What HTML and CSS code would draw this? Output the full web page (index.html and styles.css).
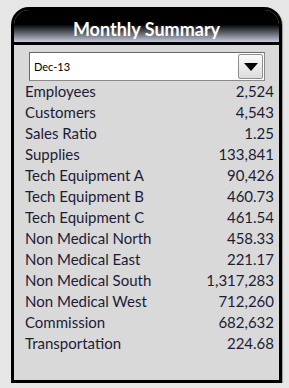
FILE: index.html
```html
<!DOCTYPE html>
<html lang="en">
<head>
    <meta charset="UTF-8">
    <title>Monthly Summary</title>
    <link rel="stylesheet" href="styles.css">
</head>
<body>
    <!-- Summary Panel -->
    <div class="panel">
        <div class="panel-header">Monthly Summary</div>

        <!-- Month selector -->
        <div class="picker">
            <div class="picker-value">Dec-13</div>
            <div class="picker-button">
                <svg width="14" height="8" viewBox="0 0 14 8"><polygon points="0,0 14,0 7,8" fill="#000"/></svg>
            </div>
        </div>

        <!-- Figures -->
        <div class="rows">
            <div class="row"><span>Employees</span><span>2,524</span></div>
            <div class="row"><span>Customers</span><span>4,543</span></div>
            <div class="row"><span>Sales Ratio</span><span>1.25</span></div>
            <div class="row"><span>Supplies</span><span>133,841</span></div>
            <div class="row"><span>Tech Equipment A</span><span>90,426</span></div>
            <div class="row"><span>Tech Equipment B</span><span>460.73</span></div>
            <div class="row"><span>Tech Equipment C</span><span>461.54</span></div>
            <div class="row"><span>Non Medical North</span><span>458.33</span></div>
            <div class="row"><span>Non Medical East</span><span>221.17</span></div>
            <div class="row"><span>Non Medical South</span><span>1,317,283</span></div>
            <div class="row"><span>Non Medical West</span><span>712,260</span></div>
            <div class="row"><span>Commission</span><span>682,632</span></div>
            <div class="row"><span>Transportation</span><span>224.68</span></div>
        </div>
    </div>
</body>
</html>
```

FILE: styles.css
```css
/* Page */
body {
    margin: 0;
    padding: 7px 0 0 11px;
    background-color: #e6e6e6;
    font-family: Lato, "Liberation Sans", sans-serif;
}

/* Panel */
.panel {
    width: 265px;
    height: 370px;
    border: 3px solid #000;
    border-radius: 18px 18px 0 0;
    background-color: #d9d9d9;
    box-shadow: 1px 1px 1px #9a9a9a;
    overflow: hidden;
}

.panel-header {
    height: 32px;
    border-bottom: 3px solid #000;
    background: linear-gradient(#000 0%, #000 45%, #c5cbdc 100%);
    color: #fff;
    font-size: 18px;
    font-weight: bold;
    line-height: 38px;
    text-align: center;
}

/* Month selector */
.picker {
    display: flex;
    margin: 7px 0 0 15px;
    width: 236px;
    height: 29px;
    box-sizing: border-box;
    border: 1px solid #8a8a8a;
    border-top-color: #6a6a6a;
    border-left-color: #6a6a6a;
    background-color: #fff;
}

.picker-value {
    flex: 1;
    padding-left: 4px;
    font-size: 11px;
    line-height: 27px;
    color: #000;
}

.picker-button {
    width: 25px;
    margin: 1px;
    box-sizing: border-box;
    border: 1px solid #8f8f8f;
    border-radius: 2px;
    background: linear-gradient(#fafafa, #dcdcdc);
    display: flex;
    align-items: center;
    justify-content: center;
}

/* Figures */
.rows {
    padding: 0 5px 0 11px;
}

.row {
    display: flex;
    justify-content: space-between;
    height: 21px;
    font-size: 15px;
    line-height: 21px;
    color: #1c1c38;
}
```
